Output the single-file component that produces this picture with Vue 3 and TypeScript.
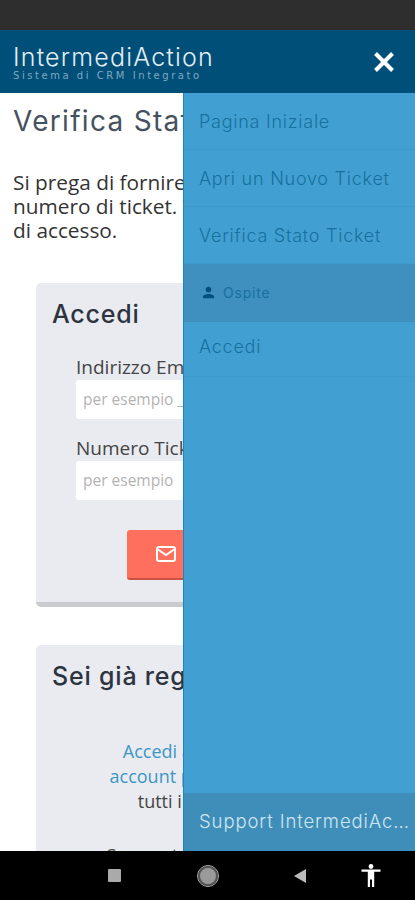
<template>
  <div class="phone">
    <div class="status-bar"></div>
    <header class="app-header">
      <div class="brand">
        <div class="brand-name">IntermediAction</div>
        <div class="brand-sub">Sistema di CRM Integrato</div>
      </div>
      <svg class="close-icon" width="24" height="24" viewBox="0 0 24 24">
        <path d="M3.5 3.5L20.5 20.5M20.5 3.5L3.5 20.5" stroke="#fff" stroke-width="4" fill="none" />
      </svg>
    </header>

    <div class="body">
      <main class="content">
        <div class="content-inner">
          <h1 class="page-title">Verifica Stato Ticket</h1>
          <p class="intro">
            Si prega di fornire il vostro indirizzo email e il<br />
            numero di ticket. Vi sarà inviato un link<br />
            di accesso.
          </p>

          <section class="card login-card">
            <h2 class="card-title">Accedi</h2>
            <div class="field">
              <label>Indirizzo Email</label>
              <div class="input">per esempio _</div>
            </div>
            <div class="field">
              <label>Numero Ticket</label>
              <div class="input">per esempio</div>
            </div>
            <div class="submit">
              <svg width="22" height="18" viewBox="0 0 22 18" fill="none">
                <rect x="2" y="2" width="18" height="14" rx="2" stroke="#fff" stroke-width="2" />
                <path d="M3 4.5L11 10L19 4.5" stroke="#fff" stroke-width="2" />
              </svg>
            </div>
          </section>

          <section class="card help-card">
            <h2 class="card-title">Sei già registrato?</h2>
            <p class="help-text">
              <a>Accedi al tuo profilo</a><br />
              <a>account per consultare</a><br />
              tutti i tuoi ticket.
            </p>
            <p class="help-more">Se questo è il tuo primo</p>
          </section>
        </div>
      </main>

      <aside class="drawer">
        <nav class="menu">
          <a v-for="item in menuItems" :key="item" class="menu-item">{{ item }}</a>
          <div class="guest">
            <svg width="17" height="17" viewBox="0 0 24 24" fill="#004f7c">
              <path d="M12 12c2.200 0 4-1.800 4-4s-1.800-4-4-4-4 1.800-4 4 1.800 4 4 4zm0 2c-2.700 0-8 1.300-8 4v2h16v-2c0-2.700-5.300-4-8-4z" />
            </svg>
            <span>Ospite</span>
          </div>
          <a class="menu-item menu-item-last">Accedi</a>
        </nav>
        <div class="drawer-footer">Support IntermediAction</div>
      </aside>
    </div>

    <footer class="nav-bar">
      <span class="nav-square"></span>
      <span class="nav-circle"></span>
      <span class="nav-back"></span>
      <svg class="nav-access" width="20" height="23" viewBox="0 0 20 23" fill="#fff">
        <circle cx="10" cy="2.500" r="2.400" />
        <path d="M0.500 5.500h19v2.200h-6.300V23h-2.200v-7.500h-2V23H6.800V7.700H0.500z" />
      </svg>
    </footer>
  </div>
</template>

<script setup lang="ts">
const menuItems: string[] = ['Pagina Iniziale', 'Apri un Nuovo Ticket', 'Verifica Stato Ticket']
</script>

<style>
body {
  margin: 0;
}
</style>

<style scoped>
.phone {
  width: 415px;
  height: 900px;
  display: flex;
  flex-direction: column;
  overflow: hidden;
  background: #fff;
  font-family: "Open Sans", "Liberation Sans", sans-serif;
}

.status-bar {
  height: 30px;
  flex: none;
  background: #2e2e2e;
}

.app-header {
  height: 63px;
  flex: none;
  display: flex;
  align-items: center;
  justify-content: space-between;
  padding: 0 19px 0 13px;
  background: #004f78;
  color: #e3eef4;
}

.brand {
  padding-top: 2px;
}

.brand-name {
  font-family: Inter, sans-serif;
  font-size: 25px;
  line-height: 26px;
  letter-spacing: 1.2px;
  font-weight: 300;
}

.brand-sub {
  font-family: "DejaVu Sans", sans-serif;
  font-size: 10px;
  line-height: 12px;
  letter-spacing: 2.55px;
  color: #7fa9c1;
  white-space: nowrap;
}

.body {
  flex: 1;
  min-height: 0;
  display: flex;
  overflow: hidden;
}

.content {
  width: 183px;
  flex: none;
  overflow: hidden;
}

.content-inner {
  width: 415px;
  padding-left: 13px;
  box-sizing: border-box;
}

.page-title {
  margin: 12px 0 0;
  font-family: Inter, sans-serif;
  font-size: 28px;
  line-height: 32px;
  font-weight: 400;
  letter-spacing: 1.3px;
  color: #46515f;
  white-space: nowrap;
}

.intro {
  margin: 33px 0 0;
  font-size: 20.8px;
  line-height: 24px;
  color: #333;
  white-space: nowrap;
}

.card {
  width: 340px;
  margin-left: 23px;
  background: #e9ebf0;
  border-radius: 5px;
  padding: 1px 16px;
  box-sizing: border-box;
}

.login-card {
  height: 324px;
  margin-top: 41px;
  border-bottom: 5px solid #c9cbce;
}

.help-card {
  height: 400px;
  margin-top: 38px;
}

.card-title {
  margin: 15px 0 0;
  font-family: Inter, sans-serif;
  font-size: 25px;
  line-height: 30px;
  font-weight: 500;
  letter-spacing: 0.8px;
  color: #2c3440;
  white-space: nowrap;
}

.field {
  margin: 0 0 0 24px;
  width: 270px;
}

.login-card .card-title + .field {
  margin-top: 25px;
}

.field + .field {
  margin-top: 16px;
}

.field label {
  display: block;
  font-size: 19px;
  line-height: 26px;
  color: #444;
  white-space: nowrap;
}

.input {
  height: 39px;
  padding-left: 7px;
  background: #fff;
  border-radius: 3px;
  font-size: 15.5px;
  line-height: 39px;
  color: #b3b3b3;
  white-space: nowrap;
  overflow: hidden;
}

.submit {
  width: 120px;
  height: 50px;
  margin: 30px 0 0 75px;
  padding-left: 28px;
  box-sizing: border-box;
  display: flex;
  align-items: center;
  background: #ff6f5e;
  border-bottom: 2px solid #c95245;
  border-radius: 3px;
}

.help-text {
  margin: 48px 0 0;
  text-align: center;
  font-size: 18px;
  line-height: 25px;
  color: #444;
}

.help-text a {
  color: #3b96c4;
}

.help-more {
  margin: 29px 0 0;
  text-align: center;
  font-size: 18px;
  line-height: 25px;
  color: #444;
}

.drawer {
  flex: 1;
  min-width: 0;
  display: flex;
  flex-direction: column;
  justify-content: space-between;
  background: #41a0d1;
  border-left: 1px solid #1c86b8;
}

.menu-item {
  display: block;
  height: 57px;
  padding-left: 15px;
  box-sizing: border-box;
  font-family: Inter, sans-serif;
  font-size: 18px;
  line-height: 58px;
  font-weight: 300;
  letter-spacing: 0.75px;
  color: #17709f;
  border-bottom: 1px solid #3f9aca;
}

.menu-item-last {
  height: 55px;
  line-height: 50px;
}

.guest {
  height: 58px;
  display: flex;
  align-items: center;
  gap: 6px;
  padding: 0 0 2px 16px;
  box-sizing: border-box;
  background: #3f90bf;
  font-family: Inter, sans-serif;
  font-size: 14px;
  letter-spacing: 0.8px;
  color: #17709f;
}

.drawer-footer {
  height: 58px;
  flex: none;
  padding: 0 6px 0 15px;
  background: #3f8db9;
  font-family: Inter, sans-serif;
  font-size: 18.5px;
  line-height: 57px;
  font-weight: 300;
  letter-spacing: 0.9px;
  color: #cfe6f2;
  white-space: nowrap;
  overflow: hidden;
  text-overflow: ellipsis;
}

.nav-bar {
  height: 49px;
  flex: none;
  display: flex;
  align-items: center;
  background: #000;
}

.nav-square {
  margin-left: 108px;
  width: 13px;
  height: 13px;
  border-radius: 1px;
  background: #aaa;
}

.nav-circle {
  margin-left: 77px;
  box-sizing: border-box;
  width: 20px;
  height: 20px;
  border-radius: 50%;
  background: #9a9a9a;
  border: 2px solid #555;
  outline: 1px solid #aaa;
}

.nav-back {
  margin-left: 76px;
  width: 0;
  height: 0;
  border-top: 7px solid transparent;
  border-bottom: 7px solid transparent;
  border-right: 12px solid #bbb;
}

.nav-access {
  margin-left: 55px;
}
</style>
